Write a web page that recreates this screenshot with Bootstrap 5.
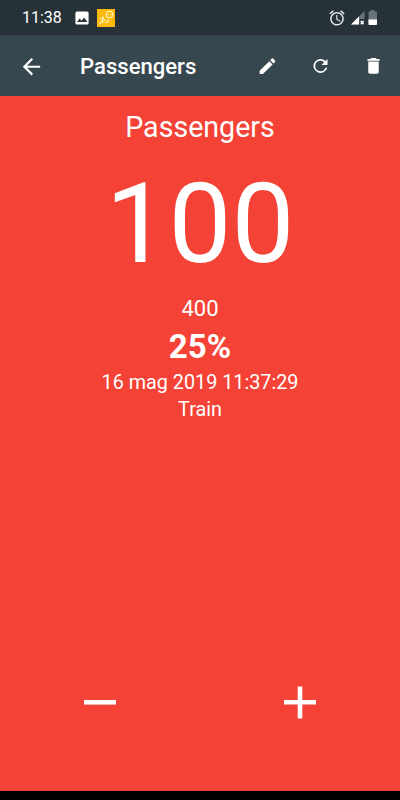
<!DOCTYPE html>
<html lang="en">
<head>
<meta charset="utf-8">
<meta name="viewport" content="width=device-width, initial-scale=1">
<title>Passengers</title>
<link href="https://cdn.jsdelivr.net/npm/bootstrap@5.3.0/dist/css/bootstrap.min.css" rel="stylesheet">
<style>
body{font-family:Roboto,sans-serif;background:#f44336;height:800px;overflow:hidden}
svg{display:block;flex:none}
.status{height:35px;background:#263238;padding:0 22px;font-size:16px;line-height:19px}
.icon-photo{margin-left:13px}
.icon-app{margin-left:8.400px}
.icon-signal{margin-left:6px}
.icon-battery{margin:0 1px 0 3px}
.appbar{height:61px;background:#37474f;padding:0 16px 0 21px;border-top:1px solid #34434b}
.appbar h1{font-size:22.1px;font-weight:500;line-height:26px;margin:0 0 0 38px}
.appbar .action{margin-left:32px}
.content-area{padding-top:15px}
.line-name{font-size:28.6px;line-height:33px}
.line-count{font-size:112px;line-height:132px;margin-top:14px}
.line-max{font-size:22px;line-height:26px;margin-top:6px}
.line-percent{font-size:33px;line-height:39px;margin-top:5px}
.line-info{font-size:19.8px;line-height:24px;margin-top:5px}
.line-kind{font-size:19.8px;line-height:24px;margin-top:3px}
.controls{height:178px}
.controls .btn{border:0;border-radius:0;padding:0}
.sysbar{height:9px;background:#000}
</style>
<script src="https://cdn.jsdelivr.net/npm/bootstrap@5.3.0/dist/js/bootstrap.bundle.min.js"></script>
</head>
<body class="d-flex flex-column text-white m-0">
<div class="status d-flex align-items-center">
  <span>11:38</span>
  <svg class="icon-photo" width="14" height="14" viewBox="0 0 14 14"><rect x=".4" y=".4" width="13.2" height="13.2" rx="1.6" fill="#fff"/><path d="M2 11l2.700-3.600 1.900 2.300 2.600-3.300L12.300 11z" fill="#263238"/></svg>
  <svg class="icon-app" width="18" height="18" viewBox="0 0 18 18"><path fill="#fdb90b" d="M0 0h18v18H0z"/><g fill="none" stroke="#fff3c4" stroke-width="1.100" stroke-linecap="round"><circle cx="12.500" cy="5.500" r="3.300"/><path d="M11.200 5v.8M13.800 5v.8M2.500 15l2.300-2.300 2 .3M4.800 12.500l1-2.500 2.700 1.200M11.500 12.500l-.5-2M3 9.500l2.500.3M8.500 13.500l3-1"/><path d="M6 8.400h.1" stroke-width="1.800"/></g></svg>
  <svg class="ms-auto" width="16" height="16" viewBox="1.500 1.500 21 21"><path fill="#e4e7e8" d="M22 5.720l-4.600-3.860-1.290 1.530 4.600 3.860L22 5.720zM7.880 3.390L6.600 1.860 2 5.710l1.290 1.530 4.590-3.850zM12.500 8H11v6l4.750 2.850.75-1.230-4-2.370V8zM12 4c-4.970 0-9 4.030-9 9s4.020 9 9 9a9 9 0 0 0 0-18zm0 16c-3.870 0-7-3.130-7-7s3.130-7 7-7 7 3.130 7 7-3.130 7-7 7z"/></svg>
  <svg class="icon-signal" width="14" height="14" viewBox="0 0 14 14"><path fill="#69757b" d="M13.500 0v8H8.500v5.500H0z"/><path fill="#fff" d="M8 5.500V13.500H0z"/><path d="M9.700 10l3 3.300M12.700 10l-3 3.300" stroke="#fff" stroke-width="1.400"/></svg>
  <svg class="icon-battery" width="9" height="15" viewBox="0 0 9 15"><path fill="#69757b" d="M2.500 0h4v1.500H9V15H.5V1.500h2z"/><path fill="#fff" d="M.5 9.500H9V14a1 1 0 0 1-1 1H1.500a1 1 0 0 1-1-1z"/></svg>
</div>
<nav class="appbar d-flex align-items-center">
  <svg width="21" height="21" viewBox="2.300 3.100 19.400 19.400"><path fill="#fff" d="M20 12H7.830l5.590-5.590L12 5l-8 8 8 8 1.410-1.410L7.830 14H20v-2z"/></svg>
  <h1>Passengers</h1>
  <svg class="ms-auto" width="21" height="21" viewBox="0 0.300 24 24"><path fill="#fff" d="M3 17.250V21h3.750L17.810 9.940l-3.750-3.750L3 17.250zM20.710 7.040a1 1 0 0 0 0-1.410l-2.340-2.340a1 1 0 0 0-1.410 0l-1.830 1.830 3.750 3.750 1.830-1.830z"/></svg>
  <svg class="action" width="21" height="21" viewBox="0 0.600 24 24"><path fill="#fff" d="M17.650 6.350A8 8 0 1 0 19.730 14h-2.080A6 6 0 1 1 12 6c1.660 0 3.140.69 4.220 1.780L13 11h7V4l-2.350 2.350z"/></svg>
  <svg class="action" width="21" height="21" viewBox="0 0.600 24 24"><path fill="#fff" d="M6 19c0 1.100.9 2 2 2h8c1.100 0 2-.9 2-2V7H6v12zM19 4h-3.500l-1-1h-5l-1 1H5v2h14V4z"/></svg>
</nav>
<main class="content-area flex-grow-1 d-flex flex-column text-center">
  <div class="line-name">Passengers</div>
  <div class="line-count">100</div>
  <div class="line-max">400</div>
  <div class="line-percent fw-bold">25%</div>
  <div class="line-info">16 mag 2019 11:37:29</div>
  <div class="line-kind">Train</div>
  <div class="controls row g-0 mt-auto">
    <button class="btn col-6 d-flex align-items-center justify-content-center" aria-label="Decrease"><svg width="34" height="34" viewBox="0 0 34 34"><path fill="#fff" d="M1 15h32v4.600H1z"/></svg></button>
    <button class="btn col-6 d-flex align-items-center justify-content-center" aria-label="Increase"><svg width="34" height="34" viewBox="0 0 34 34"><path fill="#fff" d="M1 15h13.700V1.500h4.600V15H33v4.600H19.300V33.500h-4.600V19.600H1z"/></svg></button>
  </div>
</main>
<div class="sysbar"></div>
</body>
</html>
